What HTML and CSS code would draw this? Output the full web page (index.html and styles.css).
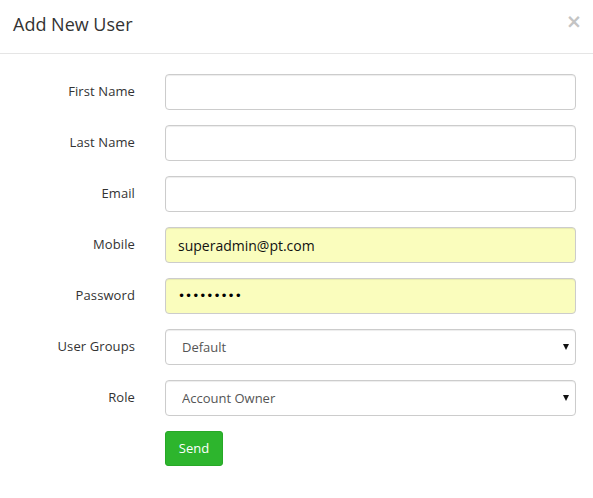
FILE: index.html
```html
<!DOCTYPE html>
<html>
<head>
<meta charset="utf-8">
<link rel="stylesheet" href="styles.css">
</head>
<body>
<div class="modal">
  <div class="modal-header">
    <h4 class="title">Add New User</h4>
    <span class="close">×</span>
  </div>
  <form class="modal-body">
    <div class="row"><label>First Name</label><input class="control" type="text"></div>
    <div class="row"><label>Last Name</label><input class="control" type="text"></div>
    <div class="row"><label>Email</label><input class="control" type="text"></div>
    <div class="row"><label>Mobile</label><input class="control autofill" type="text" value="superadmin@pt.com"></div>
    <div class="row"><label>Password</label><input class="control autofill password" type="password" value="123456789"></div>
    <div class="row"><label>User Groups</label><div class="select-wrap"><select class="control select"><option>Default</option></select></div></div>
    <div class="row"><label>Role</label><div class="select-wrap"><select class="control select"><option>Account Owner</option></select></div></div>
    <div class="row"><span></span><div><button type="button" class="btn">Send</button></div></div>
  </form>
</div>
</body>
</html>
```
FILE: styles.css
```css
* { box-sizing: border-box; }
body {
  margin: 0;
  background: #fff;
  font-family: "Open Sans", "DejaVu Sans", sans-serif;
  color: #333;
}
.modal { width: 593px; }
.modal-header {
  height: 54px;
  border-bottom: 1px solid #e5e5e5;
  display: flex;
  justify-content: space-between;
  align-items: flex-start;
  padding: 12px 11px 0 13px;
}
.title {
  margin: 0;
  font-size: 18px;
  font-weight: normal;
  line-height: 24px;
  color: #333;
}
.close {
  font-family: "DejaVu Sans", sans-serif;
  font-size: 19px;
  font-weight: bold;
  color: #c4c4c4;
  line-height: 16px;
  margin-top: 1px;
}
.modal-body {
  padding: 20px 17px 0 0;
  display: flex;
  flex-direction: column;
  gap: 15px;
}
.row {
  display: grid;
  grid-template-columns: 135px 411px;
  column-gap: 30px;
  align-items: center;
}
.row label {
  text-align: right;
  font-size: 13px;
  color: #333;
  padding-bottom: 3px;
  letter-spacing: 0.1px;
}
.control {
  width: 411px;
  height: 36px;
  border: 1px solid #ccc;
  border-radius: 4px;
  padding: 0 12px;
  font-family: inherit;
  font-size: 14px;
  color: #333;
  background: #fff;
  box-shadow: inset 0 1px 1px rgba(0,0,0,0.075);
  outline: none;
}
.autofill { background: #fafdbd; color: #111; }
.password {
  font-family: "DejaVu Sans", sans-serif;
  font-size: 12px;
  color: #000;
}
.select-wrap { position: relative; width: 411px; }
.select {
  appearance: none;
  -webkit-appearance: none;
  font-size: 13px;
  color: #555;
  padding: 0 16px;
}
.select-wrap::after {
  content: "";
  position: absolute;
  right: 7px;
  top: 15px;
  border-left: 3.5px solid transparent;
  border-right: 3.5px solid transparent;
  border-top: 6px solid #111;
  pointer-events: none;
}
.btn {
  height: 35px;
  width: 58px;
  border: 1px solid #27a827;
  border-radius: 3px;
  background: #2db52d;
  color: #fff;
  font-family: inherit;
  font-size: 13px;
  padding: 0 0 1px;
}
```
